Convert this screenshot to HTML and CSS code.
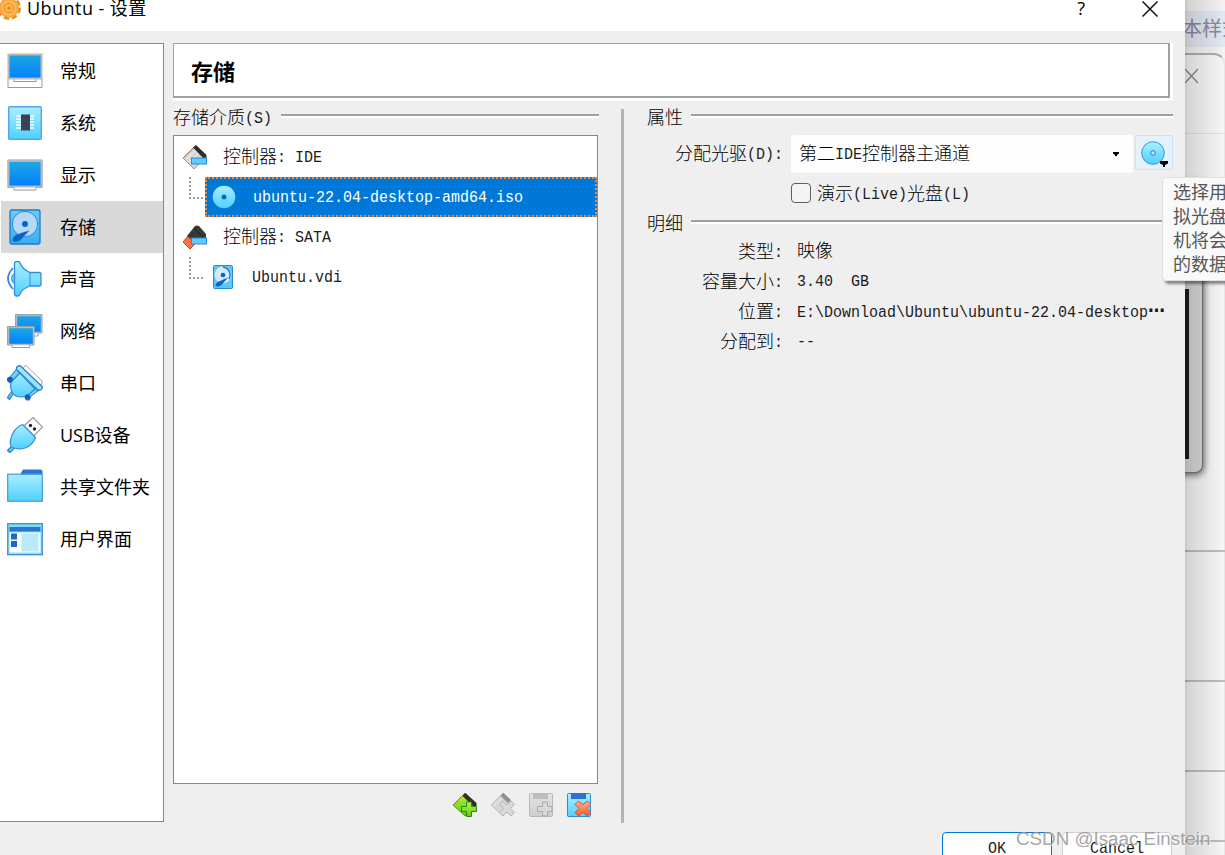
FILE: index.html
```
<!DOCTYPE html>
<html lang="zh-CN">
<head>
    <meta charset="UTF-8">
    <meta name="viewport" content="width=device-width, initial-scale=1.0">
    <title>Ubuntu - 设置</title>
    <link rel="stylesheet" href="styles.css">
</head>
<body>
    <!-- shared gradients and icons -->
    <svg class="defs" width="0" height="0">
        <defs>
            <linearGradient id="screen" x1="0" y1="0" x2="0" y2="1"><stop offset="0" stop-color="#20a8e0"/><stop offset="1" stop-color="#0080ff"/></linearGradient>
            <linearGradient id="cyan" x1="0" y1="0" x2="0" y2="1"><stop offset="0" stop-color="#a8efff"/><stop offset="1" stop-color="#50d0ff"/></linearGradient>
            <linearGradient id="blue" x1="0" y1="0" x2="0" y2="1"><stop offset="0" stop-color="#6cccfa"/><stop offset="1" stop-color="#38aeed"/></linearGradient>
            <linearGradient id="green" x1="0" y1="0" x2="0" y2="1"><stop offset="0" stop-color="#b4f53c"/><stop offset="1" stop-color="#5fca12"/></linearGradient>
            <linearGradient id="red" x1="0" y1="0" x2="0" y2="1"><stop offset="0" stop-color="#ffb49a"/><stop offset="1" stop-color="#fb5a2c"/></linearGradient>
            <linearGradient id="grey" x1="0" y1="0" x2="0" y2="1"><stop offset="0" stop-color="#e2e2e2"/><stop offset="1" stop-color="#cecece"/></linearGradient>
            <radialGradient id="orange"><stop offset="0" stop-color="#ffe09a"/><stop offset="1" stop-color="#f9a032"/></radialGradient>
            <symbol id="disk" viewBox="0 0 36 36">
                <rect x="3" y="1" width="30" height="34" rx="1.5" fill="url(#blue)" stroke="#1c79cf" stroke-width="1.3"/>
                <circle cx="18" cy="15" r="12.7" fill="#b4d8f6" stroke="#2d86dc"/>
                <circle cx="18" cy="15" r="3" fill="#0864cc"/>
                <path d="M22.500 21.500L13 31.500Q10 33.500 6 32.500Q4.500 30 8 26.500Q13 24 22.500 21.500z" fill="#0864cc"/>
            </symbol>
            <symbol id="disk-small" viewBox="0 0 24 24">
                <rect x="2.500" y="0.500" width="19" height="23" rx="1" fill="#5cc8fa" stroke="#2a8ad8"/>
                <circle cx="12" cy="10" r="8.500" fill="#d4e9fb"/>
                <path d="M12 2A8 8 0 0 1 18 14" fill="none" stroke="#2078d2" stroke-width="1.500"/>
                <circle cx="12" cy="10" r="2.300" fill="#0864cc"/>
                <path d="M17 12.500L10 20.500Q7 22 4.500 21Q4 18.500 8 16.500z" fill="#0864cc"/>
            </symbol>
            <symbol id="disc" viewBox="0 0 24 24">
                <circle cx="12" cy="12" r="11.300" fill="url(#cyan)" stroke="#3c93dc"/>
                <circle cx="12" cy="12" r="2.300" fill="#c4ebfb" stroke="#2876c8"/>
            </symbol>
        </defs>
    </svg>

    <!-- windows behind the dialog -->
    <div class="behind">
        <div class="behind-tab">本样式</div>
        <div class="behind-page"></div>
        <svg class="behind-close" width="16" height="16"><path d="M1 1L14 15M14 1L1 15" stroke="#8a8a8a" stroke-width="1.300"/></svg>
        <div class="behind-window"></div>
        <div class="behind-line line-1"></div>
        <div class="behind-line line-2"></div>
        <div class="behind-line line-3"></div>
        <div class="behind-line line-4"></div>
        <div class="behind-line line-5"></div>
        <div class="behind-shade"></div>
    </div>

    <div class="window">
        <div class="titlebar">
            <svg class="gear" width="22" height="24" viewBox="0 0 22 24">
                <circle cx="9" cy="8" r="10" fill="none" stroke="#ee8c18" stroke-width="4" stroke-dasharray="4.850 3"/>
                <circle cx="9" cy="8" r="10" fill="url(#orange)"/>
                <circle cx="9" cy="8" r="4.800" fill="#ffb648" stroke="#e08a20"/>
                <circle cx="9" cy="8" r="1.800" fill="#e6861c"/>
            </svg>
            <span class="title">Ubuntu - 设置</span>
            <span class="help">?</span>
            <svg class="close" width="16" height="16"><path d="M0.500 0.500L15.500 15.500M15.500 0.500L0.500 15.500" stroke="#111" stroke-width="1.500"/></svg>
        </div>

        <div class="content">
            <div class="sidebar">
                <div class="item">
                    <svg width="36" height="36">
                        <path d="M1 25.500H35V34.500H1z" fill="#fff" stroke="#999"/>
                        <path d="M7 26V28.500H29V26" fill="#fff" stroke="#999"/>
                        <rect x="1.500" y="1.500" width="33" height="24" fill="url(#screen)" stroke="#c0b8b8" stroke-width="2"/>
                    </svg>
                    <span>常规</span>
                </div>
                <div class="item">
                    <svg width="36" height="36">
                        <rect x="1.700" y="1.700" width="32.600" height="32.600" rx="1" fill="url(#cyan)" stroke="#55a5e8" stroke-width="1.400"/>
                        <path d="M9 11H27M9 14H27M9 17H27M9 20H27M9 23H27" stroke="#fff" stroke-width="1.500"/>
                        <rect x="14" y="9.500" width="9" height="16" fill="#3b4254"/>
                    </svg>
                    <span>系统</span>
                </div>
                <div class="item">
                    <svg width="36" height="36">
                        <path d="M1 3H35V30.500H29V33H7V30.500H1z" fill="#fff" stroke="#999"/>
                        <rect x="1.500" y="4" width="33" height="25.500" fill="url(#screen)" stroke="#b2b8c0" stroke-width="2"/>
                    </svg>
                    <span>显示</span>
                </div>
                <div class="item selected">
                    <svg width="36" height="36"><use href="#disk"/></svg>
                    <span>存储</span>
                </div>
                <div class="item">
                    <svg width="36" height="36">
                        <path d="M6 7Q-4 17.500 6 28" fill="none" stroke="#3384d4" stroke-width="1.700"/>
                        <path d="M8 12.500Q4.500 13 4.500 17.500Q4.500 22 8 22.500" fill="#62cff8" stroke="#3b8edb"/>
                        <path d="M7.500 3Q7.500 0.500 9.500 0.500H11Q12.500 0.500 13 2Q15 8 23 11.500H32Q34 11.500 34 13.500V23Q34 25 32 25H23Q15 28 13 33Q12.500 35 11 35H9.500Q7.500 35 7.500 32z" fill="url(#cyan)" stroke="#368bd8" stroke-width="1.300"/>
                        <path d="M23 11.500V25" stroke="#368bd8"/>
                    </svg>
                    <span>声音</span>
                </div>
                <div class="item">
                    <svg width="36" height="36">
                        <path d="M8.500 1.500H35V20H31V23H14V20H8.500z" fill="#fff" stroke="#999"/>
                        <rect x="9.500" y="2.500" width="25" height="17" fill="url(#screen)" stroke="#b2b8c0" stroke-width="1.500"/>
                        <path d="M0.500 13.500H27V32H22.500V34.500H5V32H0.500z" fill="#fff" stroke="#999"/>
                        <rect x="1.500" y="14.500" width="25" height="17" fill="url(#screen)" stroke="#b2b8c0" stroke-width="1.500"/>
                    </svg>
                    <span>网络</span>
                </div>
                <div class="item">
                    <svg width="36" height="36">
                        <path d="M15.500 3L19 0.500L35 16V19L31 22z" fill="#fff" stroke="#a2a2a2"/>
                        <path d="M7 28L2.500 34.500L0.500 32.500L5 26" fill="#5fcdf5" stroke="#2e85d0" stroke-width="1.300"/>
                        <path d="M9.500 4L3 12L0.500 13V16L3 18L7 16L13 9zM31 26L24 31L22.500 35H19L18 32L20 28L26 22z" fill="#6dd0f7" stroke="#2876cc"/>
                        <path d="M13 8L5 16Q3 19 4 24Q5 29 9 31Q14 33 20 31L28 24z" fill="url(#cyan)" stroke="#2e85d0" stroke-width="1.200"/>
                        <path d="M9.500 4.500Q9 1 13 0.500L35.500 22Q35 25 31.500 25.500z" fill="#9ce7fd" stroke="#2e7fd0" stroke-width="1.300"/>
                        <circle cx="20.500" cy="32" r="2.700" fill="#155fc2"/>
                        <circle cx="3.200" cy="14.500" r="2.700" fill="#155fc2"/>
                    </svg>
                    <span>串口</span>
                </div>
                <div class="item">
                    <svg width="36" height="36">
                        <path d="M17 9L26 0.500L35.500 10L27 19z" fill="#fff" stroke="#999" stroke-width="1.200"/>
                        <circle cx="23.500" cy="8.500" r="1.700" fill="#222"/><circle cx="27.500" cy="12" r="1.700" fill="#222"/>
                        <path d="M5 29L0.500 33.500L3 35.500L7.500 31" fill="#5fcdf5" stroke="#2e85d0" stroke-width="1.300"/>
                        <path d="M15.500 7.500L28.500 20.500Q26 28 18 31Q12 33 5 30.500Q2.500 28 3.500 23Q6 11 15.500 7.500z" fill="url(#cyan)" stroke="#3b8fdb" stroke-width="1.300"/>
                    </svg>
                    <span>USB设备</span>
                </div>
                <div class="item">
                    <svg width="36" height="36">
                        <path d="M14 6V4L16 0.500H34L35.500 2V6z" fill="#2a75d2"/>
                        <rect x="0.700" y="5.200" width="34.600" height="27" fill="url(#cyan)" stroke="#4697dc" stroke-width="1.200"/>
                    </svg>
                    <span>共享文件夹</span>
                </div>
                <div class="item">
                    <svg width="36" height="36">
                        <rect x="0.700" y="2.700" width="34.600" height="31" fill="#7bdefa" stroke="#4a94d8" stroke-width="1.400"/>
                        <rect x="2.500" y="6" width="31" height="4.500" fill="#2a75d2"/>
                        <rect x="2.500" y="11.500" width="31" height="20" fill="#fff"/>
                        <path d="M4 12.500H10V18.500H4zM4 20H10V26H4z" fill="#1968d0"/>
                        <rect x="14.500" y="12.500" width="17" height="18" fill="#b9e9fa"/>
                    </svg>
                    <span>用户界面</span>
                </div>
            </div>

            <div class="main">
                <div class="header-frame">
                    <h1 class="header">存储</h1>
                </div>

                <div class="panels">
                    <div class="media">
                        <div class="group-title"><span>存储介质<i>(S)</i></span><hr></div>
                        <div class="tree">
                            <div class="row">
                                <svg width="24" height="24" viewBox="0 0 24 24">
                                    <path d="M0 13L12 1L23 12L11 24z" fill="#d7d7d7" stroke="#999"/>
                                    <path d="M0.500 13L12 1.500" stroke="#d66a42"/>
                                    <path d="M3 14L14 4M6 17L17 7M9 20L20 10" stroke="#f4f4f4"/>
                                    <path d="M10 2.500L13 0L23.500 10V14H21z" fill="#2e2e2e"/>
                                    <rect x="8.500" y="13" width="15" height="6" fill="#64caff" stroke="#268ad4"/>
                                </svg>
                                <span>控制器<i>: IDE</i></span>
                            </div>
                            <div class="row child">
                                <div class="branch"></div>
                                <div class="entry active">
                                    <svg width="24" height="24" viewBox="0 0 24 24">
                                        <circle cx="12" cy="12" r="11.300" fill="url(#cyan)"/>
                                        <circle cx="12" cy="12" r="2.500" fill="#0870b8"/>
                                    </svg>
                                    <i>ubuntu-22.04-desktop-amd64.iso</i>
                                </div>
                            </div>
                            <div class="row">
                                <svg width="24" height="24" viewBox="0 0 24 24">
                                    <path d="M0 17L5 11L12 19L7 24z" fill="#ff7042" stroke="#d24517"/>
                                    <path d="M4 11L12 1Q14 0 16 1L23 9V14L12 17z" fill="#383838"/>
                                    <path d="M11 3L22 14" stroke="#202020"/>
                                    <rect x="8.500" y="13" width="15" height="6" fill="#64caff" stroke="#268ad4"/>
                                </svg>
                                <span>控制器<i>: SATA</i></span>
                            </div>
                            <div class="row child">
                                <div class="branch"></div>
                                <div class="entry">
                                    <svg width="24" height="24"><use href="#disk-small"/></svg>
                                    <i>Ubuntu.vdi</i>
                                </div>
                            </div>
                        </div>
                        <div class="toolbar">
                            <svg width="24" height="24">
                                <path d="M0 12L12 0L23 11L12 23z" fill="url(#green)" stroke="#569c20"/>
                                <path d="M0.500 12L11 1" stroke="#ed5f24"/>
                                <path d="M9.500 3L12.500 0L23.500 10V13H20z" fill="#2e2e2e"/>
                                <path d="M13.500 9H18.500V13.500H23.500V18.500H18.500V23.500H13.500V18.500H8.500V13.500H13.500z" fill="url(#green)" stroke="#338211"/>
                            </svg>
                            <svg width="24" height="24">
                                <path d="M0 12L12 0L23 11L12 23z" fill="#d6d6d6" stroke="#c0c0c0"/>
                                <path d="M3 13L13 3" stroke="#eee"/>
                                <path d="M9.500 3L12.500 0L20 7L17 10z" fill="#909090"/>
                                <path d="M12 8L16 12L20 8L23.500 11.500L19.500 15.500L23.500 19.500L20 23L16 19L12 23L8.500 19.500L12.500 15.500L8.500 11.500z" fill="#d9d9d9" stroke="#b4b4b4"/>
                            </svg>
                            <svg width="24" height="24">
                                <rect x="0.500" y="0.500" width="23" height="23" rx="1" fill="url(#grey)" stroke="#b8b8b8"/>
                                <path d="M4 0H19V6H4z" fill="#bdbdbd"/>
                                <path d="M13.500 9H18.500V13.500H23V18.500H18.500V23H13.500V18.500H8.500V13.500H13.500z" fill="#d8d8d8" stroke="#aaa"/>
                            </svg>
                            <svg width="24" height="24">
                                <rect x="0.500" y="0.500" width="23" height="23" rx="1" fill="url(#cyan)" stroke="#298bd8"/>
                                <path d="M4 0H19V6H4z" fill="#2b72d0"/>
                                <path d="M11.500 8L16 11.500L20.500 8L24 11.500L20 15.500L24 19.500L20.500 23L16 19.500L11.500 23L8 19.500L12 15.500L8 11.500z" fill="url(#red)" stroke="#e04c20"/>
                            </svg>
                        </div>
                    </div>

                    <div class="splitter"></div>

                    <div class="details">
                        <div class="group-title"><span>属性</span><hr></div>
                        <div class="drive">
                            <label class="label">分配光驱<i>(D):</i></label>
                            <div class="combo">
                                <span>第二<i>IDE</i>控制器主通道</span>
                                <svg width="6" height="4"><path d="M0 0H6V1.500L4 3V4H2V3L0 1.500z" fill="#000"/></svg>
                            </div>
                            <div class="disc-button">
                                <svg width="24" height="24"><use href="#disc"/></svg>
                                <svg class="caret" width="8" height="6"><path d="M0 0H8V2.500L5 4V6H3V4L0 2.500z" fill="#000"/></svg>
                            </div>
                        </div>
                        <div class="live">
                            <span class="checkbox"></span>
                            <span>演示<i>(Live)</i>光盘<i>(L)</i></span>
                        </div>
                        <div class="group-title second"><span>明细</span><hr></div>
                        <div class="info"><span class="label">类型<i>:</i></span><span class="value">映像</span></div>
                        <div class="info"><span class="label">容量大小<i>:</i></span><span class="value"><i>3.40&nbsp; GB</i></span></div>
                        <div class="info"><span class="label">位置<i>:</i></span><span class="value"><i>E:\Download\Ubuntu\ubuntu-22.04-desktop<b>⋯</b></i></span></div>
                        <div class="info"><span class="label">分配到<i>:</i></span><span class="value"><i>--</i></span></div>
                    </div>
                </div>
            </div>
        </div>

        <div class="buttons">
            <div class="button default"><i>OK</i></div>
            <div class="button"><i>Cancel</i></div>
        </div>
    </div>

    <div class="tooltip">选择用虚<br>拟光盘文<br>机将会读<br>的数据以</div>
    <div class="watermark">CSDN @Isaac Einstein</div>
</body>
</html>
```
FILE: styles.css
```
* {
    box-sizing: border-box;
}
body {
    margin: 0;
    width: 1225px;
    height: 855px;
    position: relative;
    overflow: hidden;
    background: #fff;
    color: #000;
    font-family: "Liberation Sans", "Noto Sans CJK SC", sans-serif;
    font-size: 18px;
    font-weight: 300;
    line-height: 24px;
    white-space: nowrap;
}
svg {
    display: block;
    flex: none;
}
.defs {
    position: absolute;
}
/* latin text in the fixed pitch face, half the width of a hanzi */
i {
    display: inline-block;
    font-family: "Liberation Mono", monospace;
    font-size: 15px;
    font-style: normal;
    font-weight: 400;
    line-height: 18px;
    vertical-align: 1px;
    transform: scaleY(1.14);
    color: #1c1c1c;
}

/* background windows */
.behind {
    position: absolute;
    left: 1185px;
    top: 0;
    width: 40px;
    height: 855px;
    overflow: hidden;
    background: #fbfbfb;
}
.behind-tab {
    position: absolute;
    top: 11px;
    left: 0;
    width: 60px;
    height: 36px;
    line-height: 36px;
    font-size: 20px;
    font-weight: 400;
    text-indent: -3px;
    background: #eaf0f8;
    color: #8d8dac;
}
.behind-page {
    position: absolute;
    top: 53px;
    left: -60px;
    width: 101px;
    height: 820px;
    border: 2px solid #b4b4b4;
    border-right-color: #f0f0f0;
    border-radius: 0 12px 0 0;
    background: #fff;
}
.behind-close {
    position: absolute;
    left: -1px;
    top: 68px;
}
.behind-window {
    position: absolute;
    left: -50px;
    top: 180px;
    width: 68px;
    height: 293px;
    background: #dedede;
    border-right: 1px solid #777;
    border-bottom: 1px solid #777;
    border-radius: 0 0 8px 0;
    box-shadow: 1px 2px 7px rgba(0, 0, 0, 0.6);
}
.behind-window::after {
    content: "";
    position: absolute;
    right: 13px;
    top: 109px;
    width: 4px;
    height: 170px;
    background: #1c1c1c;
}
.behind-line {
    position: absolute;
    left: 0;
    width: 40px;
    height: 2px;
    background: #c4c4c4;
}
.line-1 { top: 133px; height: 1px; background: #e8e8e8; }
.line-2 { top: 550px; }
.line-3 { top: 680px; }
.line-4 { top: 770px; }
.line-5 { top: 840px; }
.behind-shade {
    position: absolute;
    inset: 0;
    border-left: 2px solid rgba(0, 0, 0, 0.18);
    background: linear-gradient(to right, rgba(0, 0, 0, 0.17), rgba(0, 0, 0, 0.03));
}

/* dialog */
.window {
    position: absolute;
    left: 0;
    top: 0;
    width: 1185px;
    height: 855px;
    background: #efefef;
    display: flex;
    flex-direction: column;
}
.titlebar {
    height: 31px;
    flex: none;
    background: #fff;
    display: flex;
    align-items: flex-start;
}
.title {
    flex: 1;
    margin: -4px 0 0 5px;
    font-family: "Open Sans", "Noto Sans CJK SC", sans-serif;
    font-weight: 400;
    font-size: 18px;
    letter-spacing: 0.45px;
}
.help {
    margin-top: -4px;
    font-family: "Open Sans", sans-serif;
    font-weight: 400;
}
.close {
    margin: 1px 27px 0 57px;
}
.content {
    display: flex;
    padding-top: 12px;
    height: 792px;
    flex: none;
}
.sidebar {
    width: 164px;
    height: 779px;
    border: solid #828790;
    border-width: 1px 1px 1px 0;
    background: #fff;
    padding: 1px 0 0 1px;
    font-family: "Open Sans", "Noto Sans CJK SC", sans-serif;
    font-weight: 400;
}
.item {
    height: 52px;
    padding-left: 6px;
    display: flex;
    align-items: center;
    gap: 17px;
}
.item span {
    padding-bottom: 1px;
}
.selected {
    background: #d9d9d9;
}
.main {
    width: 1000px;
    margin-left: 9px;
}
.header-frame {
    background: #fff;
    padding: 0 3px 3px 0;
}
.header {
    margin: 0;
    height: 55px;
    border: solid #a0a0a0;
    border-width: 1px 2px 2px 1px;
    background: #fff;
    padding-left: 17px;
    line-height: 58px;
    font-size: 22px;
    font-weight: 700;
}
.panels {
    display: flex;
    padding-top: 8px;
}
.media {
    width: 426px;
}
.group-title {
    display: flex;
    height: 26px;
    line-height: 18px;
}
.group-title hr {
    flex: 1;
    height: 4px;
    margin: 5px 0 0 9px;
    border: 0;
    border-top: 2px solid #a0a0a0;
    background: #fff;
}
.tree {
    width: 425px;
    height: 649px;
    border: 1px solid #828790;
    background: #fff;
    padding-top: 1px;
}
.row {
    height: 40px;
    padding-left: 9px;
    display: flex;
    align-items: center;
    gap: 16px;
}
.child {
    padding-left: 15px;
    gap: 0;
    align-items: stretch;
}
.branch {
    width: 14px;
    height: 22px;
    border-left: 2px dotted #a0a0a0;
    border-bottom: 2px dotted #a0a0a0;
}
.entry {
    flex: 1;
    margin-left: 2px;
    padding-left: 6px;
    display: flex;
    align-items: center;
    gap: 17px;
}
.entry i {
    padding-top: 2px;
}
.active {
    background: #0078d7;
    border: 2px dotted #ff8728;
    padding-left: 5px;
}
.active i {
    color: #fff;
}
.toolbar {
    display: flex;
    justify-content: flex-end;
    gap: 14px;
    padding: 9px 8px 0 0;
}
.splitter {
    width: 3px;
    height: 714px;
    margin-left: 22px;
    background: #b4b4b4;
}
.details {
    width: 526px;
    margin-left: 23px;
}
.details .group-title hr {
    margin-left: 8px;
}
.label {
    width: 136px;
    text-align: right;
    flex: none;
}
.drive {
    display: flex;
    line-height: 38px;
}
.combo {
    width: 342px;
    height: 38px;
    margin: 0 2px 0 8px;
    padding: 0 14px 0 8px;
    display: flex;
    align-items: center;
    justify-content: space-between;
    background: #fdfdfd;
    border-radius: 2px;
}
.disc-button {
    position: relative;
    width: 38px;
    height: 35px;
    padding: 5px;
    background: #e5f1fb;
    border: 1px solid #c8e4fb;
    border-radius: 2px;
}
.caret {
    position: absolute;
    left: 24px;
    top: 25px;
}
.live {
    display: flex;
    align-items: center;
    gap: 6px;
    margin: 11px 0 0 144px;
    height: 20px;
}
.checkbox {
    width: 20px;
    height: 20px;
    margin-bottom: 2px;
    border: 1px solid #5e5e5e;
    border-radius: 4px;
    background: #f4f4f4;
}
.second {
    margin-top: 11px;
    height: 22px;
}
.info {
    display: flex;
    gap: 14px;
    height: 30px;
    line-height: 30px;
}
.value {
    line-height: 28px;
}
.info b {
    font-weight: 700;
    font-size: 17px;
    line-height: 1;
    font-family: "DejaVu Sans", sans-serif;
}
.buttons {
    display: flex;
    gap: 10px;
    margin: 9px 0 0 942px;
}
.button {
    width: 110px;
    height: 36px;
    border: 1px solid #d0d0d0;
    border-radius: 4px;
    background: #fdfdfd;
    text-align: center;
    line-height: 30px;
}
.default {
    border-color: #0078d7;
}
.tooltip {
    position: absolute;
    left: 1162px;
    top: 177px;
    width: 90px;
    height: 104px;
    padding: 3px 10px;
    border: 1px solid #e0e0e0;
    border-radius: 4px;
    background: #f9f9f9;
    color: #575757;
    font-weight: 400;
    box-shadow: 3px 3px 3px rgba(0, 0, 0, 0.45);
}
.watermark {
    position: absolute;
    left: 1016px;
    top: 827px;
    font-size: 18.8px;
    font-weight: 400;
    color: rgba(150, 150, 150, 0.85);
    text-shadow: 1px 1px 0 rgba(255, 255, 255, 0.6);
}
```
